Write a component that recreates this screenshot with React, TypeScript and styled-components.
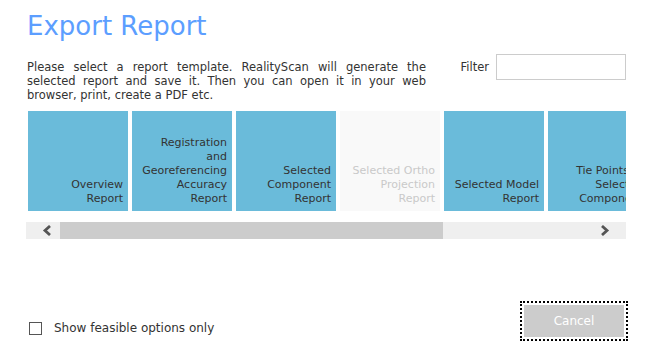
import React from "react";
import styled, { createGlobalStyle } from "styled-components";

const Global = createGlobalStyle`
  html, body { margin: 0; padding: 0; background: #ffffff; }
  body { font-family: "DejaVu Sans", Verdana, sans-serif; color: #333333; }
  * { box-sizing: border-box; }
`;

const Page = styled.div`
  width: 657px;
  height: 355px;
  padding: 10px 31px 0 26px;
  display: flex;
  flex-direction: column;
`;

const Title = styled.h1`
  margin: 0 0 0 1px;
  font-size: 26px;
  line-height: 32px;
  font-weight: normal;
  color: #5c9eff;
`;

const TopRow = styled.div`
  margin-top: 12px;
  display: flex;
  justify-content: space-between;
  align-items: flex-start;
`;

const Description = styled.p`
  margin: 0 0 0 1px;
  padding-top: 6px;
  width: 399px;
  font-size: 11.5px;
  line-height: 14px;
  text-align: justify;
  color: #333333;
`;

const FilterGroup = styled.label`
  display: flex;
  align-items: center;
  gap: 7px;
  font-size: 11.5px;
  color: #333333;
`;

const FilterInput = styled.input`
  width: 130px;
  height: 26px;
  border: 1px solid #cccccc;
  background: #ffffff;
  outline: none;
  padding: 0 4px;
`;

const Tiles = styled.div`
  margin: 9px 0 0 2px;
  width: 598px;
  overflow: hidden;
  display: flex;
  gap: 4px;
`;

const Tile = styled.div<{ $disabled?: boolean }>`
  flex: 0 0 100px;
  height: 100px;
  padding: 0 5px 5px 0;
  display: flex;
  flex-direction: column;
  justify-content: flex-end;
  text-align: right;
  white-space: pre-line;
  font-size: 11px;
  line-height: 14px;
  background: ${(p) => (p.$disabled ? "#f9f9f9" : "#6abbda")};
  color: ${(p) => (p.$disabled ? "#c9c9c9" : "#333333")};
`;

const ScrollBar = styled.div`
  margin-top: 11px;
  height: 17px;
  width: 600px;
  background: #efefef;
  display: flex;
  align-items: stretch;
`;

const ArrowButton = styled.div<{ $side: "left" | "right" }>`
  flex: 0 0 34px;
  display: flex;
  align-items: center;
  justify-content: ${(p) => (p.$side === "left" ? "flex-start" : "flex-end")};
  padding: ${(p) => (p.$side === "left" ? "0 0 0 16px" : "0 16px 0 0")};
`;

const Track = styled.div`
  flex: 1;
  display: flex;
`;

const Thumb = styled.div`
  background: #cccccc;
`;

const Footer = styled.div`
  margin-top: 66px;
  display: flex;
  justify-content: space-between;
  align-items: flex-start;
`;

const CheckGroup = styled.label`
  margin: 16px 0 0 3px;
  display: flex;
  align-items: center;
  gap: 12px;
  font-size: 12px;
  line-height: 14px;
  color: #333333;
`;

const Box = styled.span`
  width: 13px;
  height: 13px;
  border: 1px solid #555555;
  background: #ffffff;
`;

const CancelButton = styled.button`
  margin-right: 2px;
  width: 100px;
  height: 32px;
  border: none;
  background: #cccccc;
  color: #ffffff;
  font-family: "DejaVu Sans", Verdana, sans-serif;
  font-size: 12px;
  outline: 2px dotted #000000;
  outline-offset: 2px;
`;

const tiles: { text: string; disabled?: boolean }[] = [
  { text: "Overview\nReport" },
  { text: "Registration\nand\nGeoreferencing\nAccuracy\nReport" },
  { text: "Selected\nComponent\nReport" },
  { text: "Selected Ortho\nProjection\nReport", disabled: true },
  { text: "Selected Model\nReport" },
  { text: "Tie Points of\nSelected\nComponent" },
];

const Chevron = ({ dir }: { dir: "left" | "right" }) => (
  <svg width="10" height="11" viewBox="0 0 10 11">
    <path
      d={dir === "left" ? "M8 1 L3 5.5 L8 10" : "M2 1 L7 5.5 L2 10"}
      fill="none"
      stroke="#555555"
      strokeWidth="2.8"
    />
  </svg>
);

export default function App() {
  return (
    <>
      <Global />
      <Page>
        <Title>Export Report</Title>
        <TopRow>
          <Description>
            Please select a report template. RealityScan will generate the selected report and save it. Then you can open it in your web browser, print, create a PDF etc.
          </Description>
          <FilterGroup>
            Filter
            <FilterInput />
          </FilterGroup>
        </TopRow>
        <Tiles>
          {tiles.map((t) => (
            <Tile key={t.text} $disabled={t.disabled}>
              {t.text}
            </Tile>
          ))}
        </Tiles>
        <ScrollBar>
          <ArrowButton $side="left">
            <Chevron dir="left" />
          </ArrowButton>
          <Track>
            <Thumb style={{ width: "383px" }} />
          </Track>
          <ArrowButton $side="right">
            <Chevron dir="right" />
          </ArrowButton>
        </ScrollBar>
        <Footer>
          <CheckGroup>
            <Box />
            Show feasible options only
          </CheckGroup>
          <CancelButton>Cancel</CancelButton>
        </Footer>
      </Page>
    </>
  );
}
